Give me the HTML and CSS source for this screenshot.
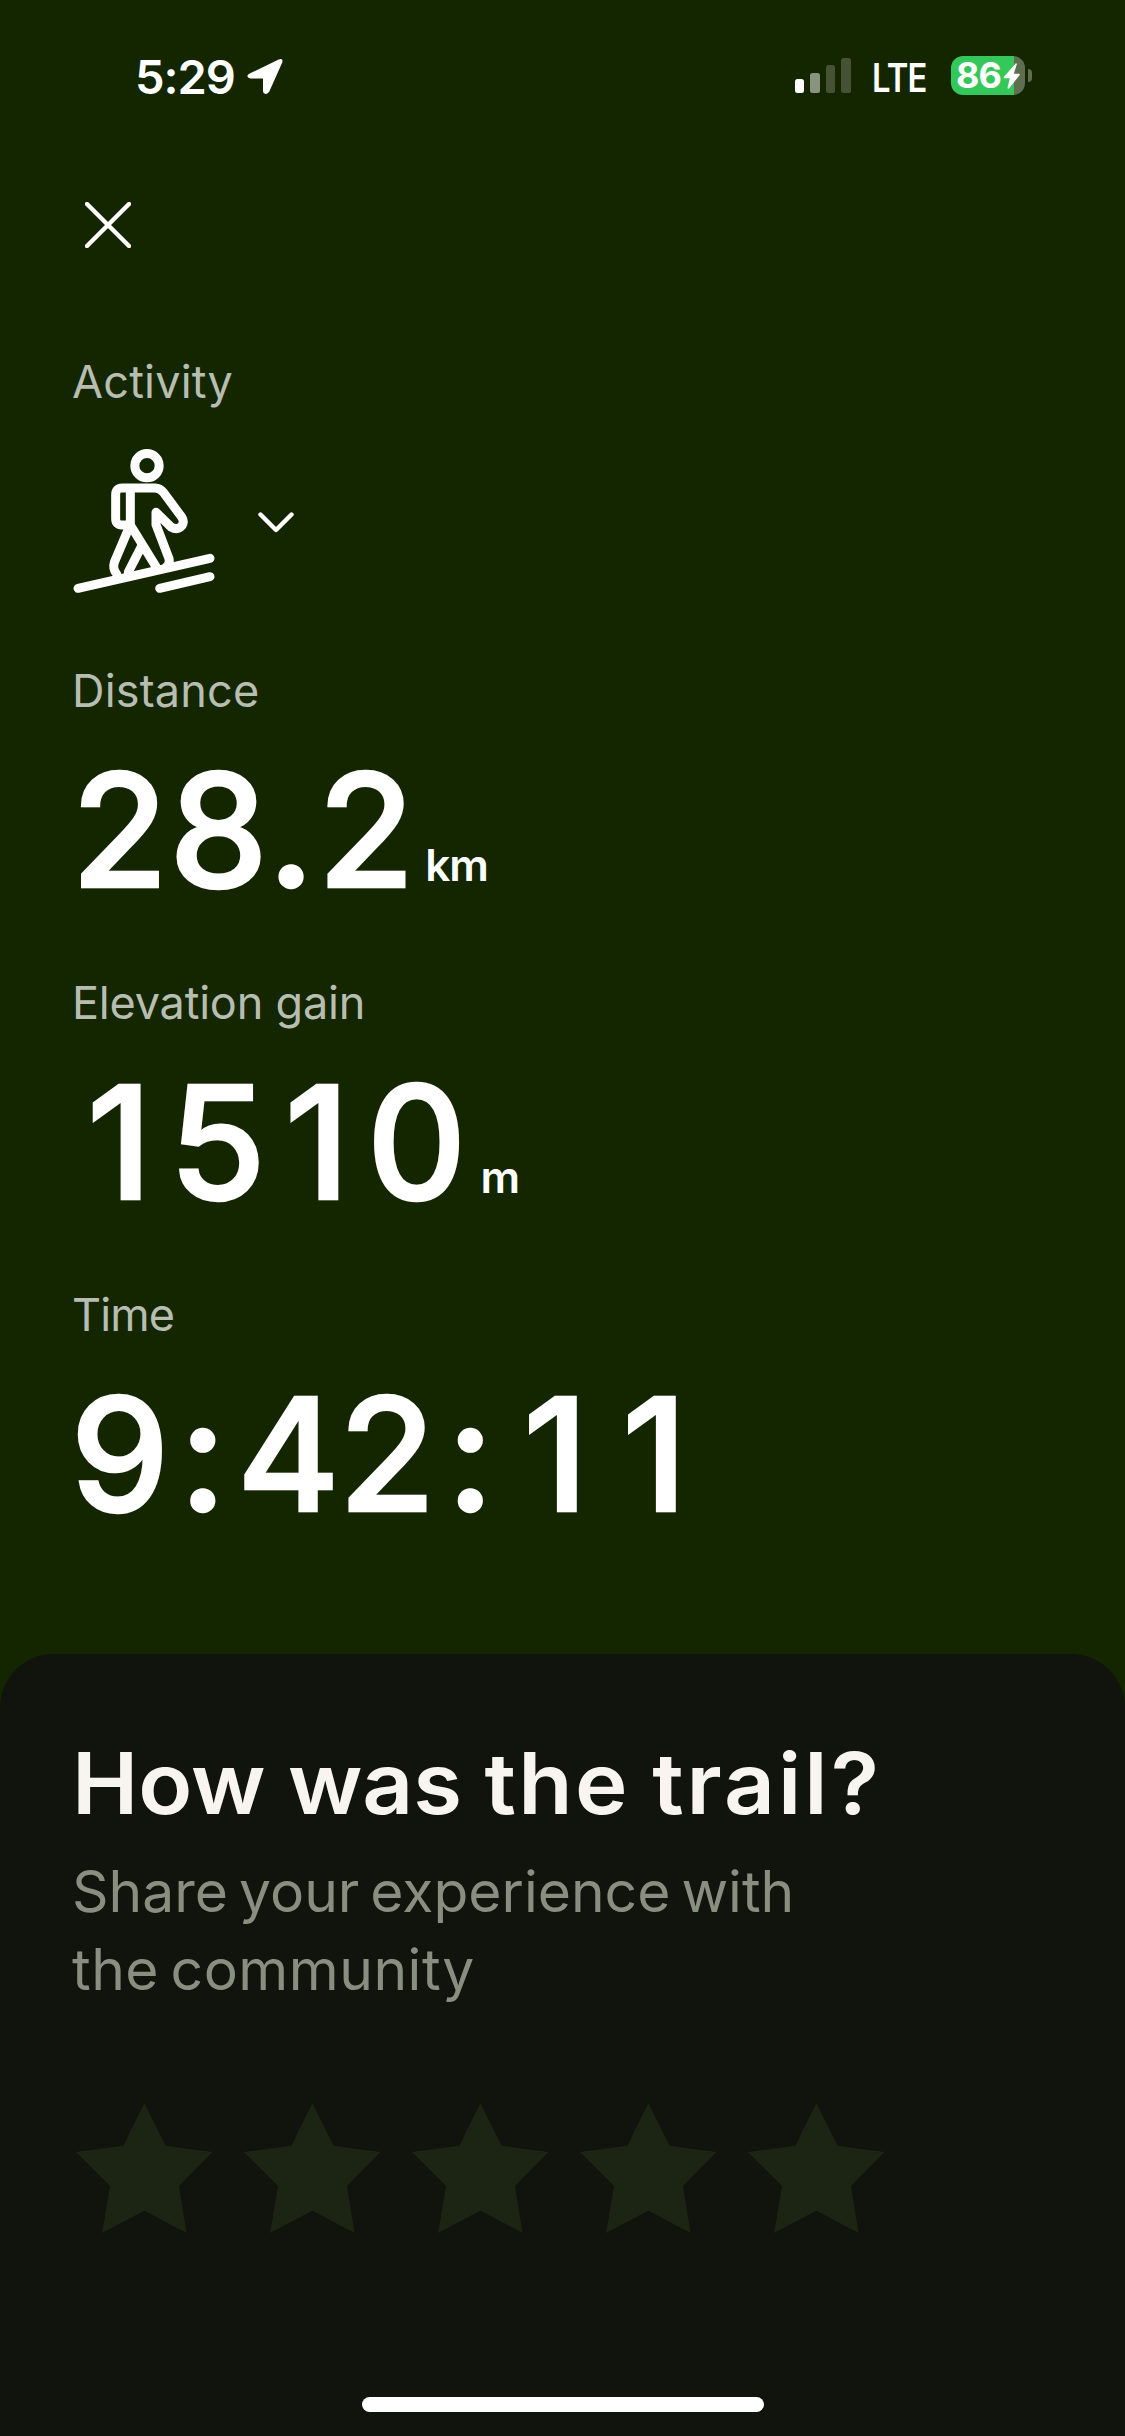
FILE: index.html
```
<!DOCTYPE html>
<html lang="en">
<head>
    <meta charset="UTF-8">
    <meta name="viewport" content="width=device-width, initial-scale=1.0">
    <title>Activity Summary</title>
    <link rel="stylesheet" href="styles.css">
</head>
<body>
    <div class="screen">
        <div class="status-bar">
            <div class="clock">
                <span class="time">5:29</span>
                <svg class="location" viewBox="0 0 108 110">
                    <path d="M8 46 L95 4 Q109 -2 106 12 L67 100 Q61 110 52 106 Q48 104 48 98 L48 61 L10 61 Q3 60 1 54 Q1 49 8 46 Z" fill="#fff"/>
                </svg>
            </div>
            <div class="indicators">
                <div class="signal">
                    <span class="bar bar-1"></span>
                    <span class="bar bar-2"></span>
                    <span class="bar bar-3"></span>
                    <span class="bar bar-4"></span>
                </div>
                <span class="network">LTE</span>
                <div class="battery">
                    <span class="battery-level">86</span>
                    <svg class="bolt" viewBox="0 0 50 78">
                        <path d="M38 1 L2 42 Q0 46 4 46 L20 46 L13 75 Q14 79 18 76 L49 37 Q51 32 47 32 L32 32 L41 4 Q41 0 38 1 Z" fill="#fff"/>
                    </svg>
                </div>
                <span class="battery-cap"></span>
            </div>
        </div>

        <div class="summary">
            <button class="close-btn" aria-label="Close">
                <svg viewBox="0 0 46 46">
                    <path d="M2 2 L44 44 M44 2 L2 44" stroke="#fff" stroke-width="4.4" stroke-linecap="round"/>
                </svg>
            </button>

            <div class="activity">
                <div class="label label-activity">Activity</div>
                <div class="activity-select">
                    <svg class="hiker" viewBox="66 324 432 438" fill="none" stroke="#fff" stroke-width="27" stroke-linecap="round" stroke-linejoin="round">
                        <circle cx="291" cy="377" r="36.5"/>
                        <path d="M241 555 H216 Q197 555 197 536 V464 Q197 444 217 444 H315 Q330 444 340 457 L395 531 Q404 545 396 557 Q383 572 363 561 L318 517 V554 L357 656 Q360 672 350 679"/>
                        <path d="M241 446 V555 L318 680"/>
                        <path d="M235 568 L193 667 Q187 686 200 702"/>
                        <path d="M273 622 L235 696"/>
                        <path d="M84 745 L480 655"/>
                        <path d="M329 745 L480 710"/>
                    </svg>
                    <svg class="chevron" viewBox="0 0 36 22">
                        <path d="M2.5 2.5 L18 18 L33.5 2.5" fill="none" stroke="#fff" stroke-width="4.4" stroke-linecap="round" stroke-linejoin="round"/>
                    </svg>
                </div>
            </div>

            <div class="metric">
                <div class="label label-distance">Distance</div>
                <div class="value value-distance">28<span class="point">.</span>2<span class="unit">km</span></div>
            </div>
            <div class="metric">
                <div class="label label-elevation">Elevation gain</div>
                <div class="value value-elevation"><span class="one">1</span>5<span class="one">1</span>0<span class="unit">m</span></div>
            </div>
            <div class="metric">
                <div class="label label-time">Time</div>
                <div class="value value-time">9<span class="colon">:</span>42<span class="colon">:</span><span class="one">1</span><span class="one">1</span></div>
            </div>
        </div>

        <div class="review">
            <h2>How was <span class="wide">the</span> <span class="wider">trail?</span></h2>
            <p>Share your experience with<br><span class="second-line">the community</span></p>
            <div class="stars">
                <svg viewBox="0 0 410 390"><path d="M205 0 L269 128 L410 147 L309 249 L332 390 L205 323 L78 390 L102 249 L0 147 L142 128 Z"/></svg>
                <svg viewBox="0 0 410 390"><path d="M205 0 L269 128 L410 147 L309 249 L332 390 L205 323 L78 390 L102 249 L0 147 L142 128 Z"/></svg>
                <svg viewBox="0 0 410 390"><path d="M205 0 L269 128 L410 147 L309 249 L332 390 L205 323 L78 390 L102 249 L0 147 L142 128 Z"/></svg>
                <svg viewBox="0 0 410 390"><path d="M205 0 L269 128 L410 147 L309 249 L332 390 L205 323 L78 390 L102 249 L0 147 L142 128 Z"/></svg>
                <svg viewBox="0 0 410 390"><path d="M205 0 L269 128 L410 147 L309 249 L332 390 L205 323 L78 390 L102 249 L0 147 L142 128 Z"/></svg>
            </div>
            <div class="home-indicator"></div>
        </div>
    </div>
</body>
</html>
```
FILE: styles.css
```
* {
    box-sizing: border-box;
}
body {
    margin: 0;
    background-color: #142600;
    font-family: Inter, "Liberation Sans", sans-serif;
    color: #fff;
}
svg {
    display: block;
}
.screen {
    width: 1125px;
    height: 2436px;
    display: flex;
    flex-direction: column;
    overflow: hidden;
}

/* status bar */
.status-bar {
    height: 132px;
    padding: 0 93px 0 135px;
    display: flex;
    justify-content: space-between;
    align-items: flex-start;
}
.clock {
    display: flex;
    align-items: flex-start;
    padding-top: 47px;
}
.time {
    width: 112px;
    font-size: 47px;
    line-height: 60px;
    font-weight: 600;
    letter-spacing: -1px;
}
.location {
    width: 36px;
    height: 37px;
    margin-top: 11px;
}
.indicators {
    display: flex;
    align-items: flex-start;
    padding-top: 56px;
}
.signal {
    display: flex;
    align-items: flex-end;
    gap: 6px;
    height: 37px;
    margin-right: 21px;
}
.bar {
    width: 9.6px;
    border-radius: 2.5px;
    background-color: #455334;
}
.bar-1 {
    height: 14px;
    background-color: #fff;
}
.bar-2 {
    height: 20px;
    background-color: #899380;
}
.bar-3 {
    height: 28px;
}
.bar-4 {
    height: 35px;
}
.network {
    width: 79px;
    font-size: 39px;
    line-height: 44px;
    font-weight: 600;
    letter-spacing: -1px;
    transform: scaleX(0.84);
    transform-origin: left;
}
.battery {
    width: 74px;
    height: 39px;
    padding-left: 5px;
    border-radius: 12px;
    background: linear-gradient(to right, #34c759 63px, #5f6d50 63px);
    display: flex;
    align-items: center;
}
.battery-level {
    width: 47px;
    font-size: 36px;
    line-height: 39px;
    font-weight: 700;
    letter-spacing: -1px;
}
.bolt {
    width: 17px;
    height: 26px;
}
.battery-cap {
    width: 4px;
    height: 13px;
    margin: 13px 0 0 3px;
    border-radius: 0 4px 4px 0;
    background-color: #5f6d50;
}

/* activity data */
.summary {
    height: 1522px;
    padding: 0 72px;
}
.close-btn {
    display: block;
    width: 46px;
    height: 46px;
    margin: 70px 0 104px 13px;
    padding: 0;
    border: none;
    background: none;
}
.label {
    font-size: 45px;
    line-height: 60px;
    color: #b8bdb2;
    white-space: nowrap;
}
.label-activity, .label-distance {
    letter-spacing: 0.2px;
}
.label-elevation {
    letter-spacing: -0.2px;
}
.label-time {
    letter-spacing: -0.9px;
}
.activity {
    margin-bottom: 67px;
}
.activity-select {
    display: flex;
    align-items: center;
    margin-top: 36px;
}
.hiker {
    width: 144px;
    height: 146px;
}
.chevron {
    width: 36px;
    height: 22px;
    margin: 4px 0 0 42px;
}
.metric {
    margin-bottom: 63px;
}
.value {
    height: 160px;
    margin: 29px 0 0 -3px;
    font-size: 157px;
    line-height: 160px;
    font-weight: 500;
    letter-spacing: -3px;
    font-feature-settings: "tnum", "calt" 0;
    -webkit-text-stroke: 2.5px #fff;
    white-space: nowrap;
}
.unit {
    display: inline-block;
    font-size: 44px;
    line-height: 60px;
    font-weight: 600;
    letter-spacing: -1px;
    -webkit-text-stroke: 0;
    transform: translateY(-6px);
}
.value-distance .unit {
    margin-left: 11px;
}
.value-elevation .unit {
    margin-left: 16px;
}
/* proportional "1" has no foot, so it gets its own cell */
.one {
    display: inline-block;
    width: 99px;
    padding-right: 16px;
    text-align: right;
    letter-spacing: 0;
    font-feature-settings: "tnum" 0, "calt" 0;
}
.point, .colon {
    display: inline-block;
    letter-spacing: 0;
    text-align: center;
    font-feature-settings: "tnum" 0, "calt" 0;
}
.point {
    width: 49px;
}
.colon {
    width: 70px;
}

/* trail review sheet */
.review {
    flex: 1;
    padding: 80px 72px 0;
    border-radius: 54px 54px 0 0;
    background-color: #10140c;
}
.review h2 {
    margin: 0;
    font-size: 85px;
    line-height: 100px;
    font-weight: 600;
    color: #f8f4ef;
    white-space: nowrap;
    transform: scaleX(1.045);
    transform-origin: left;
}
.wide {
    letter-spacing: 2.2px;
}
.wider {
    letter-spacing: 2.9px;
}
.review p {
    margin: 19px 0 0;
    font-size: 57px;
    line-height: 78px;
    word-spacing: -5px;
    color: #888e80;
    white-space: nowrap;
}
.second-line {
    letter-spacing: 0.5px;
}
.stars {
    display: flex;
    gap: 31.4px;
    margin: 94px 0 0 3.7px;
}
.stars svg {
    width: 136.6px;
    height: 130px;
    fill: #1c2413;
}
.home-indicator {
    width: 402px;
    height: 15px;
    margin: 164px 0 0 290px;
    border-radius: 8px;
    background-color: #fff;
}
```
